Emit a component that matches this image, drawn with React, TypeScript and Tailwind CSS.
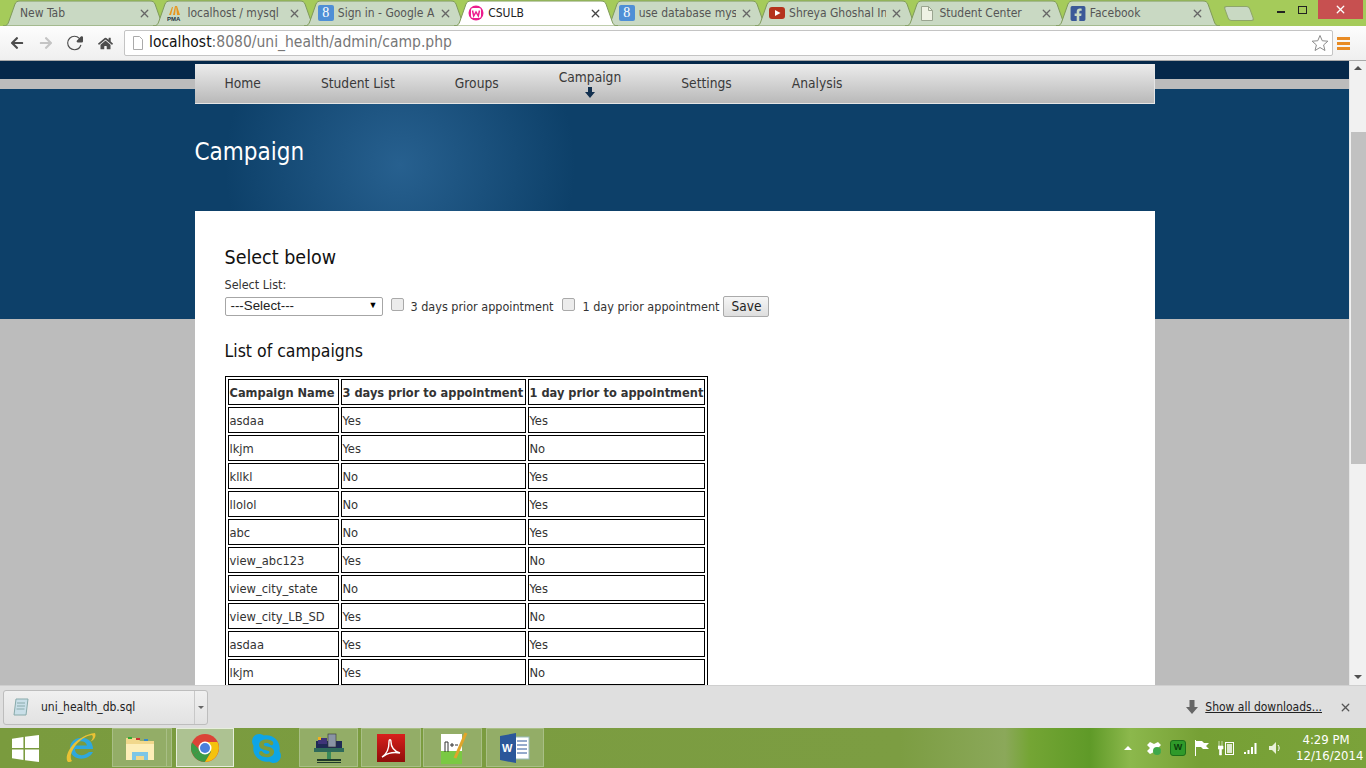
import { FaArrowLeft, FaArrowRight, FaHome, FaSkype, FaFacebookSquare } from "react-icons/fa";
import { IoReload } from "react-icons/io5";
import { HiX } from "react-icons/hi";

const rows = [
  ["asdaa", "Yes", "Yes"],
  ["lkjm", "Yes", "No"],
  ["kllkl", "No", "Yes"],
  ["llolol", "No", "Yes"],
  ["abc", "No", "Yes"],
  ["view_abc123", "Yes", "No"],
  ["view_city_state", "No", "Yes"],
  ["view_city_LB_SD", "Yes", "No"],
  ["asdaa", "Yes", "Yes"],
  ["lkjm", "Yes", "No"],
  ["kllkl", "No", "Yes"],
  ["llolol", "No", "Yes"],
];

function GoogleIcon() {
  return (
    <div className="w-4 h-4 rounded-[2px] bg-[#4f8fd6] text-white flex items-center justify-center text-[14px] leading-none font-['Liberation_Serif',serif]">
      8
    </div>
  );
}

function PmaIcon() {
  return (
    <svg width="16" height="16" viewBox="0 0 16 16">
      <path d="M2 10 5 2h1L4 10zM6 10l2-9h1l-1 9zM10 10 9 1h1l3 9z" fill="#e8961e" />
      <text x="0" y="15.5" fontSize="6" fontWeight="700" fill="#234" fontFamily="Liberation Sans, sans-serif">PMA</text>
    </svg>
  );
}

function WampIcon() {
  return (
    <svg width="16" height="16" viewBox="0 0 16 16">
      <circle cx="8" cy="8" r="7.5" fill="#ec1c8e" />
      <rect x="3" y="3" width="10" height="10" rx="2" fill="#fff" />
      <path d="M4.500 5.500l1.200 5.500L8 7l2.300 4 1.200-5.500" fill="none" stroke="#ec1c8e" strokeWidth="1.500" />
    </svg>
  );
}

function YoutubeIcon() {
  return (
    <svg width="16" height="16" viewBox="0 0 16 16">
      <rect y="2" width="16" height="12" rx="3" fill="#b5321c" />
      <path d="M6 5l5.500 3L6 11z" fill="#fff" />
    </svg>
  );
}

function PageIcon() {
  return (
    <svg width="12" height="15" viewBox="0 0 12 15">
      <path d="M.5.5h7l4 4v10H.5z" fill="#eef2e4" stroke="#9aa590" />
      <path d="M7.500.5v4h4" fill="none" stroke="#9aa590" />
    </svg>
  );
}

function Tab({ title, icon, active }: { title: string; icon?: React.ReactNode; active?: boolean }) {
  return (
    <div className={"relative w-[166px] h-[26px] -ml-[15.6px] shrink-0 " + (active ? "z-10" : "")}>
      <svg className="absolute inset-0" width="166" height="26" viewBox="0 0 166 26">
        <path
          d="M1 26C5 26 6 24 7 21L13 4C14 2 15 1 18 1H148C151 1 152 2 153 4L159 21C160 24 161 26 165 26Z"
          fill={active ? "#ffffff" : "#c9d9c3"}
          stroke="#7f9a5a"
          strokeWidth="1"
        />
      </svg>
      <div className="relative flex items-center h-full pl-[15px] pr-[17px]">
        {icon ? <span className="w-4 h-4 mr-[4px] shrink-0 flex items-center justify-center">{icon}</span> : <span className="w-[3px]" />}
        <span className={"flex-1 whitespace-nowrap overflow-hidden text-[12px] font-['DejaVu_Sans_Condensed','Noto_Sans',sans-serif] " + (active ? "text-[#222]" : "text-[#555]")}>
          {title}
        </span>
        <HiX className={"ml-[4px] text-[13px] shrink-0 " + (active ? "text-[#444]" : "text-[#666]")} />
      </div>
    </div>
  );
}

function ChromeBar() {
  return (
    <div className="h-[61px] shrink-0 flex flex-col">
      <div className="h-[26px] bg-[#a5cb5a] flex relative">
        <div className="flex pl-[17.6px]">
          <Tab title="New Tab" />
          <Tab title="localhost / mysql" icon={<PmaIcon />} />
          <Tab title="Sign in - Google A" icon={<GoogleIcon />} />
          <Tab title="CSULB" icon={<WampIcon />} active />
          <Tab title="use database mysql" icon={<GoogleIcon />} />
          <Tab title="Shreya Ghoshal In" icon={<YoutubeIcon />} />
          <Tab title="Student Center" icon={<PageIcon />} />
          <Tab title="Facebook" icon={<FaFacebookSquare className="text-[17px] text-[#3b5998]" />} />
          <div className="w-[26px] h-[15px] mt-[6px] ml-[5px] bg-[#c9d9c3] border border-[#8ea56a] rounded-[3px] skew-x-[20deg]" />
        </div>
        <div className="ml-auto flex items-start pr-[3px]">
          <div className="w-[8px] h-[2px] bg-[#222] mt-[11px] mr-[13px]" />
          <div className="relative w-[9px] h-[8px] border border-[#222] mt-[6px] mr-[11px]" />
          <div className="w-[45px] h-[19px] bg-[#c75050] flex items-center justify-center text-white">
            <HiX className="text-[13px]" />
          </div>
        </div>
      </div>
      <div className="h-[35px] bg-[linear-gradient(#fdfdfd,#efefef)] border-b border-[#a8a8a8] flex items-center">
        <div className="w-[124px] flex items-center shrink-0 pl-[10px]">
          <FaArrowLeft className="text-[14px] text-[#4d4d4d] mr-[15px]" />
          <FaArrowRight className="text-[14px] text-[#c4c4c4] mr-[13px]" />
          <IoReload className="text-[18px] text-[#4d4d4d] mr-[14px] stroke-[40px]" />
          <FaHome className="text-[15px] text-[#4d4d4d]" />
        </div>
        <div className="w-[1209px] h-[26px] bg-white border border-[#c4c4c4] rounded-[2px] flex items-center pl-[7px] pr-[3px]">
          <svg width="12" height="14" viewBox="0 0 12 14" className="mr-[5px]">
            <path d="M1.500.5h6l3 3v10h-9z" fill="#fff" stroke="#aaa" />
          </svg>
          <span className="text-[15.5px] text-[#777] font-['DejaVu_Sans_Condensed','Noto_Sans',sans-serif]">
            <span className="text-[#111]">localhost</span>:8080/uni_health/admin/camp.php
          </span>
          <svg width="18" height="18" viewBox="0 0 24 24" className="ml-auto">
            <path d="M12 2l3 7 7.500.6-5.700 5 1.800 7.400L12 18l-6.600 4 1.800-7.400-5.700-5L9 9z" fill="#fff" stroke="#888" strokeWidth="1.300" />
          </svg>
        </div>
        <div className="ml-[4px] w-[13px] flex flex-col gap-[2px]">
          <div className="h-[3px] bg-[#e88b24]" />
          <div className="h-[3px] bg-[#e88b24]" />
          <div className="h-[3px] bg-[#e88b24]" />
        </div>
      </div>
    </div>
  );
}

function NavItem({ label, current }: { label: string; current?: boolean }) {
  return (
    <div className={"px-[30px] h-full flex flex-col items-center text-[13.7px] text-[#3a3a3a] " + (current ? "pt-[3px]" : "pt-[9px]")}>
      <span className="leading-5">{label}</span>
      {current && (
        <svg width="10" height="11" viewBox="0 0 10 11">
          <path d="M3 0h4v5h3l-5 6-5-6h3z" fill="#12304f" />
        </svg>
      )}
    </div>
  );
}

function Page() {
  return (
    <div className="flex-1 overflow-hidden bg-[radial-gradient(ellipse_175px_175px_at_400px_104px,#27608f,#27608f00),linear-gradient(#05284a_0,#05284a_18px,#bcbcbc_18px,#bcbcbc_28px,#0d4069_28px,#0d4069_258px,#bcbcbc_258px)] font-['DejaVu_Sans_Condensed','Noto_Sans',sans-serif]">
      <div className="w-[960px] mx-auto pt-[3px]">
        <div className="h-[40px] flex border-r border-b border-[#e6e6e6] bg-[linear-gradient(#ececec,#b9b9b9)]">
          <NavItem label="Home" />
          <NavItem label="Student List" />
          <NavItem label="Groups" />
          <NavItem label="Campaign" current />
          <NavItem label="Settings" />
          <NavItem label="Analysis" />
        </div>
        <h1 className="h-[107px] pt-[32px] text-[24px] leading-8 text-white">Campaign</h1>
        <div className="bg-white pl-[30px] pt-[35px] pb-[40px] text-[#333]">
          <h2 className="text-[19.5px] leading-6 text-[#111]">Select below</h2>
          <div className="text-[12.5px] leading-4 mt-[7px]">Select List:</div>
          <div className="flex items-center mt-[2px] text-[12.5px] h-[22px]">
            <div className="w-[158px] h-[19px] border border-[#a6a6a6] rounded-[2px] flex items-center justify-between pl-[5px] pr-[4px] text-[13.3px] text-[#222] font-['Liberation_Sans',sans-serif]">
              <span>---Select---</span>
              <span className="text-[9px] text-black">▼</span>
            </div>
            <input type="checkbox" className="ml-[8px] mb-[3px] w-[13px] h-[13px] appearance-none border border-[#a9a9a9] rounded-[2px] bg-[#ececec]" />
            <span className="ml-[7px] pt-[2px]">3 days prior appointment</span>
            <input type="checkbox" className="ml-[9px] mb-[3px] w-[13px] h-[13px] appearance-none border border-[#a9a9a9] rounded-[2px] bg-[#ececec]" />
            <span className="ml-[7px] pt-[2px]">1 day prior appointment</span>
            <button className="ml-[4px] w-[46px] h-[21px] border border-[#aaa] rounded-[2px] bg-[linear-gradient(#f6f6f6,#dedede)] text-[13.5px] text-[#222] leading-[19px]">Save</button>
          </div>
          <h3 className="text-[17.5px] leading-6 text-[#111] mt-[22px]">List of campaigns</h3>
          <table className="mt-[13px] w-[483px] table-fixed border border-black border-separate border-spacing-[2px] text-[12.8px]">
            <thead>
              <tr className="h-[26px]">
                <th className="w-[111px] border border-black px-px pt-px text-left whitespace-nowrap text-[12.7px] font-bold">Campaign Name</th>
                <th className="w-[185px] border border-black px-px pt-px text-left whitespace-nowrap text-[12.7px] font-bold">3 days prior to appointment</th>
                <th className="w-[177px] border border-black px-px pt-px text-left whitespace-nowrap text-[12.7px] font-bold">1 day prior to appointment</th>
              </tr>
            </thead>
            <tbody>
              {rows.map((row, i) => (
                <tr key={i} className="h-[26px]">
                  {row.map((cell, j) => (
                    <td key={j} className="border border-black px-px pt-px">{cell}</td>
                  ))}
                </tr>
              ))}
            </tbody>
          </table>
        </div>
      </div>
    </div>
  );
}

function Scrollbar() {
  return (
    <div className="w-[17px] shrink-0 bg-[#f1f1f1] flex flex-col items-center border-l border-[#e6e6e6]">
      <span className="w-0 h-0 mt-[5px] border-x-[4px] border-x-transparent border-b-[4px] border-b-[#505050]" />
      <div className="w-[15px] h-[332px] mt-[62px] bg-[#c1c1c1]" />
      <span className="w-0 h-0 mt-auto mb-[6px] border-x-[4px] border-x-transparent border-t-[4px] border-t-[#505050]" />
    </div>
  );
}

function DownloadBar() {
  return (
    <div className="h-[43px] shrink-0 bg-[#dfdfdf] border-t border-[#cfcfcf] flex items-center pl-[3px] pr-[14px]">
      <div className="w-[205px] h-[35px] bg-[linear-gradient(#f0f0f0,#e2e2e2)] border border-[#bdbdbd] rounded-[3px] flex items-center">
        <svg width="16" height="18" viewBox="0 0 16 18" className="ml-[9px]">
          <path d="M3 1h12l-2 16H1z" fill="#c9dfe8" stroke="#8aa" />
          <path d="M4 5h8M4 8h8M3.500 11h8" stroke="#8aa" />
        </svg>
        <span className="ml-[12px] flex-1 text-[12px] text-[#222] font-['DejaVu_Sans_Condensed','Noto_Sans',sans-serif]">uni_health_db.sql</span>
        <div className="w-[13px] h-full border-l border-[#c8c8c8] flex items-center justify-center">
          <span className="w-0 h-0 border-x-[3px] border-x-transparent border-t-[3px] border-t-[#666]" />
        </div>
      </div>
      <svg width="12" height="14" viewBox="0 0 12 14" className="ml-auto">
        <path d="M3.500 0h5v7H12l-6 7-6-7h3.500z" fill="#666" />
      </svg>
      <span className="ml-[7px] text-[12px] underline text-[#222] font-['DejaVu_Sans_Condensed','Noto_Sans',sans-serif]">Show all downloads...</span>
      <HiX className="ml-[17px] text-[13px] text-[#555]" />
    </div>
  );
}

function TaskButton({ children, width, active }: { children: React.ReactNode; width: string; active?: boolean }) {
  return (
    <div className={width + " h-[39px] flex items-center justify-center border " + (active ? "bg-[#adc292] border-[#e6eedc]" : "bg-[#93ad67] border-[#a9bf86]")}>
      {children}
    </div>
  );
}

function Taskbar() {
  return (
    <div className="h-[40px] shrink-0 flex items-start bg-[linear-gradient(90deg,#7a9b3e_0,#7c9d42_900px,#8ba85a_1005px,#74a534_1030px,#5f9a28_1090px,#8cb84c_1130px,#76a035_1200px,#7ba23a_1366px)] text-white">
      <svg width="27" height="27" viewBox="0 0 26 26" className="ml-[12px] mt-[7px]">
        <path d="M0 3.500 11 2v10.500H0zM12.500 1.800 26 0v12.500H12.500zM0 14h11v10L0 22.500zM12.500 14H26v12l-13.500-1.800z" fill="#fff" />
      </svg>
      <svg width="32" height="34" viewBox="0 0 32 34" className="ml-[26px] mt-[3px]">
        <path d="M26 18H10c0 7 9 8 14 3h4c-5 10-23 9-23-4C5 7 19 3 26 11c1 2 2 4 2 7z" fill="#2fa8dd" />
        <path d="M10 14.500h12c-1-5-10-6-12 0z" fill="#7a9b3e" />
        <path d="M3 31C-2 26 8 5 30 2c2 5-3 8-5 9 2-2 4-5 2-7C13 6 2 24 7 30c-1 1-3 1-4 1z" fill="#eac234" />
      </svg>
      <div className="ml-[15px] flex">
        <TaskButton width="w-[55px]">
          <svg width="32" height="28" viewBox="0 0 32 28">
            <path d="M2 4h12l2 3h14v19H2z" fill="#f1d88c" />
            <path d="M2 10h28v16H22v-7H10v7H2z" fill="#fdeeb8" />
            <path d="M8 18h16v8h-4v-4h-8v4H8z" fill="#7cc6e6" />
            <rect x="4" y="3" width="4" height="2" fill="#3a3" />
            <rect x="12" y="4" width="4" height="2" fill="#c33" />
            <rect x="20" y="5" width="4" height="2" fill="#38c" />
          </svg>
        </TaskButton>
        <div className="w-[5px] h-[39px] bg-[#93ad67] border border-l-0 border-[#a9bf86]" />
      </div>
      <div className="ml-[4px]">
        <TaskButton width="w-[58px]" active>
          <svg width="28" height="28" viewBox="0 0 28 28">
            <circle cx="14" cy="14" r="14" fill="#db4437" />
            <path d="M2 21A14 14 0 0 0 14 28L21 16H9z" fill="#3c9b46" />
            <path d="M2 21A14 14 0 0 1 1 8.500L9 16z" fill="#3c9b46" />
            <path d="M14 8h12.500A14 14 0 0 1 14 28l6-10z" fill="#f4c20d" />
            <circle cx="14" cy="14" r="6.500" fill="#fff" />
            <circle cx="14" cy="14" r="5" fill="#4a80dc" />
          </svg>
        </TaskButton>
      </div>
      <FaSkype className="ml-[16px] mt-[4px] text-[33px] text-[#0ea5e6]" />
      <div className="ml-[16px]">
        <TaskButton width="w-[59px]">
          <svg width="32" height="32" viewBox="0 0 32 32">
            <rect x="3" y="9" width="26" height="8" fill="#1f2a55" />
            <rect x="5" y="6" width="9" height="6" fill="#3f3478" />
            <rect x="5" y="5" width="3" height="3" fill="#f2b01e" />
            <rect x="15" y="2" width="8" height="13" fill="#8a94a4" stroke="#333" strokeWidth=".6" />
            <rect x="1" y="16" width="30" height="4" fill="#2f6a5a" />
            <rect x="14" y="20" width="4" height="7" fill="#3b8a5a" />
            <rect x="4" y="27" width="24" height="2" fill="#1f3a2a" />
            <rect x="4" y="30" width="24" height="1" fill="#1f3a2a" />
          </svg>
        </TaskButton>
      </div>
      <div className="ml-[3px]">
        <TaskButton width="w-[60px]">
          <div className="w-[28px] h-[28px] bg-[linear-gradient(#d8201c,#8f0d0a)] flex items-center justify-center">
            <svg width="22" height="22" viewBox="0 0 22 22">
              <path d="M2 20c5-3 7-9 7-15 0-3 2-3 2 0 0 5 3 9 9 11-6-1-12 0-16 3z" fill="none" stroke="#fff" strokeWidth="1.400" />
            </svg>
          </div>
        </TaskButton>
      </div>
      <div className="ml-[2px]">
        <TaskButton width="w-[59px]">
          <svg width="30" height="34" viewBox="0 0 30 34">
            <rect x="3" y="3" width="21" height="30" fill="#fff" />
            <rect x="3" y="20" width="21" height="13" fill="#7ac943" />
            <path d="M7 21v-10h3v10M12 14h4M14 12v4M17 14h3" fill="none" stroke="#333" />
            <path d="M28 2L17 27" stroke="#e0a52a" strokeWidth="3" />
          </svg>
        </TaskButton>
      </div>
      <div className="ml-[4px]">
        <TaskButton width="w-[58px]">
          <svg width="30" height="32" viewBox="0 0 30 32">
            <rect x="12" y="5" width="17" height="22" fill="#fff" stroke="#9bb" />
            <path d="M17 9h10M17 13h10M17 17h10M17 21h10" stroke="#2b579a" />
            <path d="M0 4L16 1v30L0 28z" fill="#2b579a" />
            <text x="2" y="20" fontSize="11" fontWeight="700" fill="#fff" fontFamily="Liberation Sans, sans-serif">W</text>
          </svg>
        </TaskButton>
      </div>
      <div className="ml-auto h-full flex items-center pr-[10px]">
        <span className="w-0 h-0 border-x-[4px] border-x-transparent border-b-[4px] border-b-white" />
        <svg width="16" height="16" viewBox="0 0 16 16" className="ml-[14px]">
          <path d="M1 5l3-3 4 2 4-2 3 3-3 3 3 3-3 3-4-2-4 2-3-3 3-3z" fill="#fff" />
          <circle cx="11" cy="11" r="4" fill="#3ea84a" />
        </svg>
        <div className="ml-[8px] w-[16px] h-[16px] rounded-[3px] bg-[#2f9a2a] border border-[#1d6f1a] flex items-center justify-center text-[9px] font-bold text-[#0b3d0b] font-['Liberation_Sans',sans-serif]">W</div>
        <svg width="16" height="16" viewBox="0 0 16 16" className="ml-[8px]">
          <path d="M1.500 0v16" stroke="#fff" />
          <path d="M2 1h6l2 2h5l-3 3 3 3H9L7 7H2z" fill="#fff" />
        </svg>
        <svg width="16" height="16" viewBox="0 0 16 16" className="ml-[8px]">
          <path d="M1 1v5M4 1v5M0 6h5v3H3.500v6h-2V9H0z" fill="#fff" stroke="#fff" strokeWidth=".6" />
          <rect x="7.500" y="2.500" width="8" height="12" fill="none" stroke="#fff" />
          <rect x="9" y="4" width="5" height="9" fill="#dfe9cf" />
        </svg>
        <svg width="16" height="14" viewBox="0 0 16 14" className="ml-[9px]">
          <path d="M1 11h2v2H1zM4.500 9h2v4h-2zM8 6h2v7H8zM11.500 2h2v11h-2z" fill="#fff" />
        </svg>
        <svg width="14" height="14" viewBox="0 0 14 14" className="ml-[9px]">
          <path d="M1 5h3l4-4v12l-4-4H1z" fill="#e8f0d8" />
          <path d="M10 4c1.500 2 1.500 4 0 6" fill="none" stroke="#fff" />
        </svg>
        <div className="ml-[14px] w-[60px] text-center text-[13px] leading-[16px] font-['DejaVu_Sans_Condensed','Noto_Sans',sans-serif]">
          <div>4:29 PM</div>
          <div>12/16/2014</div>
        </div>
      </div>
    </div>
  );
}

export default function App() {
  return (
    <div className="w-[1366px] h-[768px] flex flex-col overflow-hidden">
      <ChromeBar />
      <div className="flex-1 flex min-h-0">
        <Page />
        <Scrollbar />
      </div>
      <DownloadBar />
      <Taskbar />
    </div>
  );
}
